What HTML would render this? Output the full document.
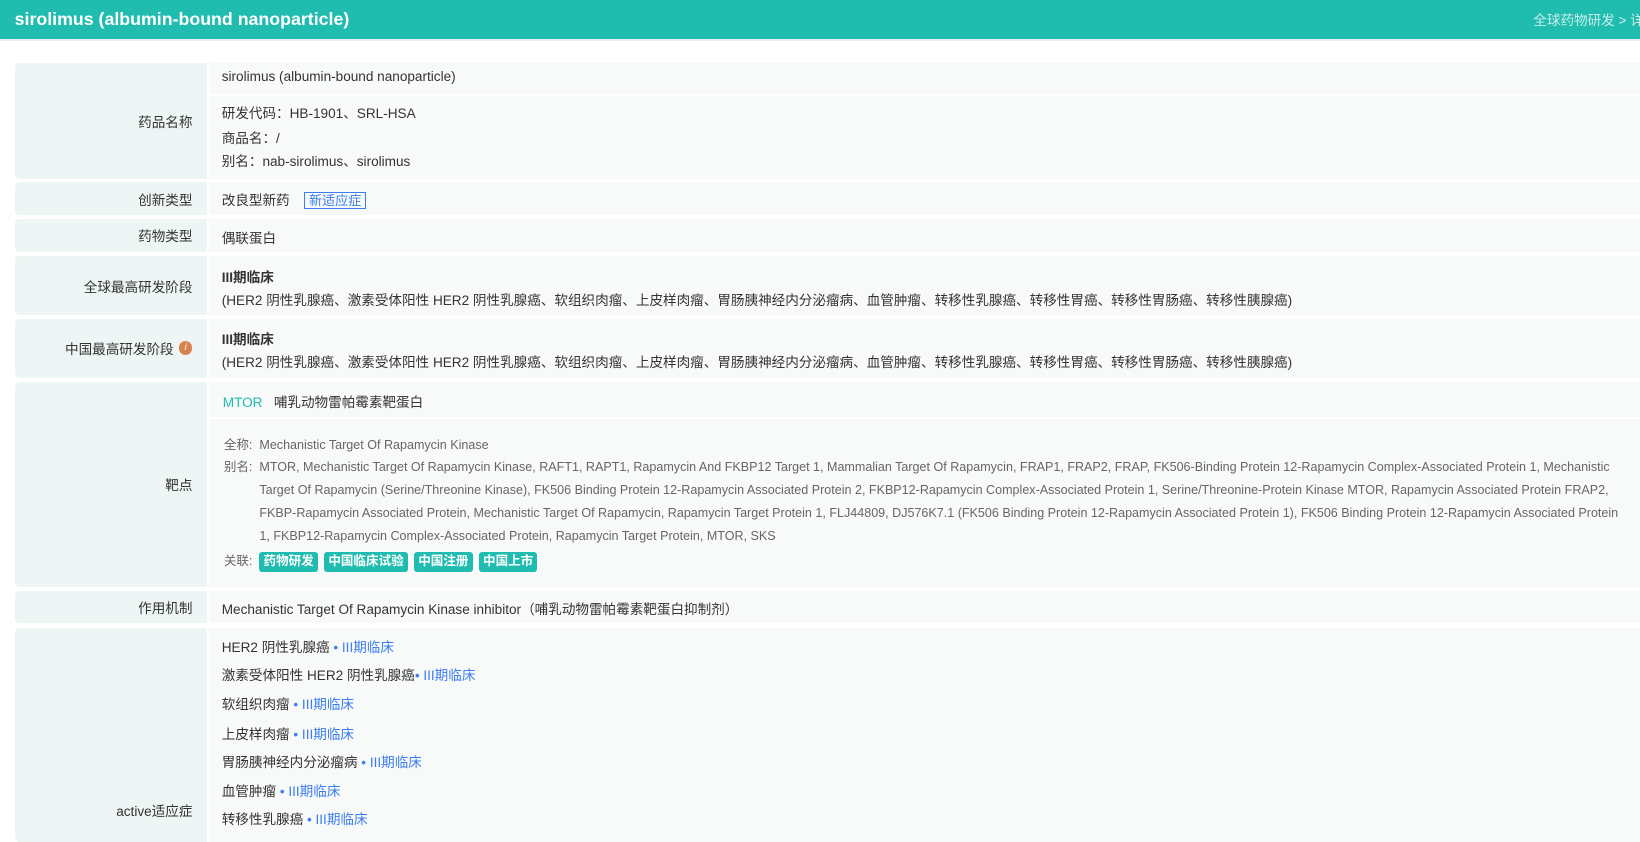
<!DOCTYPE html>
<html><head><meta charset="utf-8"><style>
*{margin:0;padding:0;box-sizing:border-box}
html{width:1640px;height:842px;overflow:hidden;background:#fff}
body{zoom:1.0459;width:1568px;height:805px;overflow:hidden;position:relative;background:#fff;font-family:"Liberation Sans","Noto Sans CJK SC",sans-serif;font-size:13px;color:#333}
.hd{position:absolute;left:0;top:0;width:1568px;height:39px;background:#1fbcaf;border-bottom:2px solid #e6f2f1;overflow:hidden}
.hd .t{position:absolute;left:14px;top:9px;color:#fff;font-weight:bold;font-size:17px}
.hd .b{position:absolute;left:1466px;top:9px;color:#c8f1ec;font-size:13px;white-space:nowrap}
.row{position:absolute;left:14px;width:1554px}
.lab{position:absolute;left:0;top:0;bottom:0;width:184px;background:#eef5f5;border-radius:4px 0 0 4px;display:flex;align-items:center;justify-content:flex-end;padding-right:14px}
.con{position:absolute;left:186px;right:0;top:0;bottom:0;background:#f8fafa}
.a{position:absolute;left:198px;white-space:nowrap}
.g{color:#666;font-size:12px}
.tag{display:inline-block;background:#1fbcaf;color:#fff;font-weight:bold;font-size:12px;padding:0 4px;border-radius:3px;height:19px;line-height:19px;margin-right:6px;vertical-align:middle}
.blue{color:#3c7ef0}
.sep{position:absolute;left:186px;right:0;height:2px;background:#fff}
</style></head><body>
<div class="hd"><div class="t">sirolimus (albumin-bound nanoparticle)</div><div class="b">全球药物研发 &gt; 详情</div></div>

<div class="row" style="top:60px;height:111px"><div class="lab">药品名称</div><div class="con"></div>
<div class="sep" style="top:30px"></div>
<div class="a" style="top:6px">sirolimus (albumin-bound nanoparticle)</div>
<div class="a" style="top:38px">研发代码：HB-1901、SRL-HSA</div>
<div class="a" style="top:61px">商品名：/</div>
<div class="a" style="top:83px">别名：nab-sirolimus、sirolimus</div></div>

<div class="row" style="top:174px;height:32px"><div class="lab">创新类型</div><div class="con"></div>
<div class="a" style="top:7px">改良型新药 <span style="margin-left:10px;border:1px solid #3c7ef0;color:#3c7ef0;padding:0 4px;font-size:12.5px">新适应症</span></div></div>

<div class="row" style="top:209px;height:32px"><div class="lab">药物类型</div><div class="con"></div>
<div class="a" style="top:8px">偶联蛋白</div></div>

<div class="row" style="top:245px;height:56px"><div class="lab">全球最高研发阶段</div><div class="con"></div>
<div class="a" style="top:9px;font-weight:bold">III期临床</div>
<div class="a" style="top:31px">(HER2 阴性乳腺癌、激素受体阳性 HER2 阴性乳腺癌、软组织肉瘤、上皮样肉瘤、胃肠胰神经内分泌瘤病、血管肿瘤、转移性乳腺癌、转移性胃癌、转移性胃肠癌、转移性胰腺癌)</div></div>

<div class="row" style="top:305px;height:56px"><div class="lab">中国最高研发阶段 <span style="display:inline-block;width:13px;height:13px;border-radius:50%;background:#d9824f;color:#fff;font-size:10px;font-style:italic;text-align:center;line-height:13px;margin-left:5px">i</span></div><div class="con"></div>
<div class="a" style="top:9px;font-weight:bold">III期临床</div>
<div class="a" style="top:31px">(HER2 阴性乳腺癌、激素受体阳性 HER2 阴性乳腺癌、软组织肉瘤、上皮样肉瘤、胃肠胰神经内分泌瘤病、血管肿瘤、转移性乳腺癌、转移性胃癌、转移性胃肠癌、转移性胰腺癌)</div></div>

<div class="row" style="top:365px;height:196px"><div class="lab">靶点</div><div class="con"></div>
<div class="sep" style="top:34px"></div>
<div class="a" style="top:9px;left:199px"><span style="color:#1fbcaf">MTOR</span>&nbsp;&nbsp; 哺乳动物雷帕霉素靶蛋白</div>
<div class="a g" style="top:50px;left:200px;line-height:22px">全称:&nbsp; Mechanistic Target Of Rapamycin Kinase</div>
<div class="a g" style="top:71px;left:200px;line-height:22px;display:flex"><span>别名:&nbsp;&nbsp;</span><span>MTOR, Mechanistic Target Of Rapamycin Kinase, RAFT1, RAPT1, Rapamycin And FKBP12 Target 1, Mammalian Target Of Rapamycin, FRAP1, FRAP2, FRAP, FK506-Binding Protein 12-Rapamycin Complex-Associated Protein 1, Mechanistic<br>Target Of Rapamycin (Serine/Threonine Kinase), FK506 Binding Protein 12-Rapamycin Associated Protein 2, FKBP12-Rapamycin Complex-Associated Protein 1, Serine/Threonine-Protein Kinase MTOR, Rapamycin Associated Protein FRAP2,<br>FKBP-Rapamycin Associated Protein, Mechanistic Target Of Rapamycin, Rapamycin Target Protein 1, FLJ44809, DJ576K7.1 (FK506 Binding Protein 12-Rapamycin Associated Protein 1), FK506 Binding Protein 12-Rapamycin Associated Protein<br>1, FKBP12-Rapamycin Complex-Associated Protein, Rapamycin Target Protein, MTOR, SKS</span></div>
<div class="a g" style="top:161px;left:200px">关联:&nbsp; <span class="tag">药物研发</span><span class="tag">中国临床试验</span><span class="tag">中国注册</span><span class="tag">中国上市</span></div></div>

<div class="row" style="top:565px;height:31px"><div class="lab">作用机制</div><div class="con"></div>
<div class="a" style="top:7px">Mechanistic Target Of Rapamycin Kinase inhibitor（哺乳动物雷帕霉素靶蛋白抑制剂）</div></div>

<div class="row" style="top:600px;height:205px"><div class="lab" style="align-items:flex-start;padding-top:165px">active适应症</div><div class="con"></div>
<div class="a" style="top:8px">HER2 阴性乳腺癌<span class="blue"> • III期临床</span></div>
<div class="a" style="top:35px">激素受体阳性 HER2 阴性乳腺癌<span class="blue">• III期临床</span></div>
<div class="a" style="top:63px">软组织肉瘤<span class="blue"> • III期临床</span></div>
<div class="a" style="top:91px">上皮样肉瘤<span class="blue"> • III期临床</span></div>
<div class="a" style="top:118px">胃肠胰神经内分泌瘤病<span class="blue"> • III期临床</span></div>
<div class="a" style="top:146px">血管肿瘤<span class="blue"> • III期临床</span></div>
<div class="a" style="top:173px">转移性乳腺癌<span class="blue"> • III期临床</span></div>
<div class="a" style="top:201px">转移性胃癌<span class="blue"> • III期临床</span></div></div>
</body></html>
